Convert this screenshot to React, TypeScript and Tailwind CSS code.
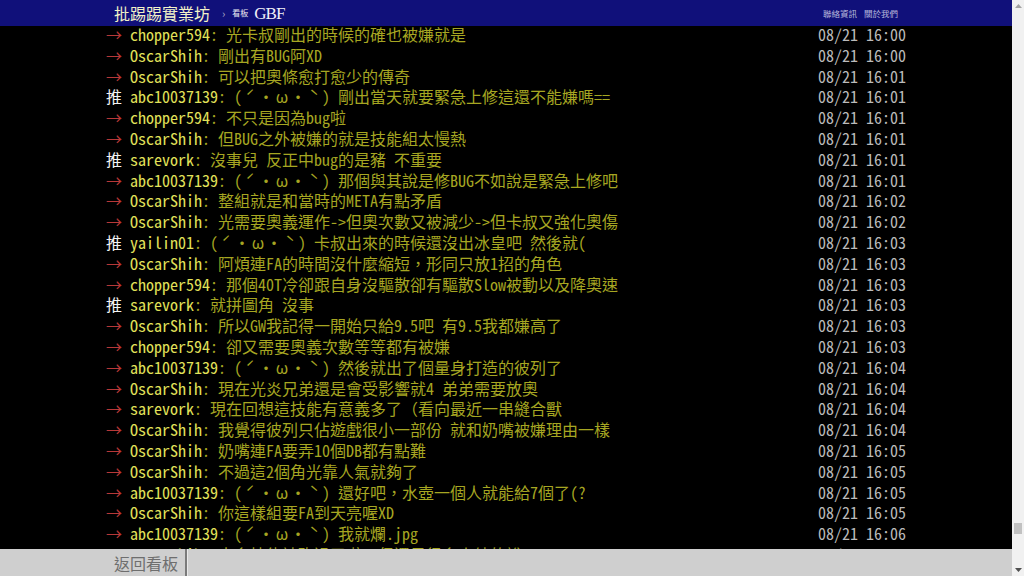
import React from "react";

type Push = { tag: "→" | "推"; user: string; face?: boolean; text: string; time: string };

const FACE_CHARS: [string, string][] = [
  ["(", "w-[8px]"],
  ["ˊ", "w-[16px]"],
  ["・", "w-[16px]"],
  ["ω", "w-[16px]"],
  ["・", "w-[16px]"],
  ["ˋ", "w-[16px]"],
  [")", "w-[8px]"],
];

const pushes: Push[] = [
  { tag: "→", user: "chopper594", text: "光卡叔剛出的時候的確也被嫌就是", time: "08/21 16:00" },
  { tag: "→", user: "OscarShih", text: "剛出有BUG阿XD", time: "08/21 16:00" },
  { tag: "→", user: "OscarShih", text: "可以把奧條愈打愈少的傳奇", time: "08/21 16:01" },
  { tag: "推", user: "abc10037139", face: true, text: "剛出當天就要緊急上修這還不能嫌嗎==", time: "08/21 16:01" },
  { tag: "→", user: "chopper594", text: "不只是因為bug啦", time: "08/21 16:01" },
  { tag: "→", user: "OscarShih", text: "但BUG之外被嫌的就是技能組太慢熱", time: "08/21 16:01" },
  { tag: "推", user: "sarevork", text: "沒事兒 反正中bug的是豬 不重要", time: "08/21 16:01" },
  { tag: "→", user: "abc10037139", face: true, text: "那個與其說是修BUG不如說是緊急上修吧", time: "08/21 16:01" },
  { tag: "→", user: "OscarShih", text: "整組就是和當時的META有點矛盾", time: "08/21 16:02" },
  { tag: "→", user: "OscarShih", text: "光需要奧義運作->但奧次數又被減少->但卡叔又強化奧傷", time: "08/21 16:02" },
  { tag: "推", user: "yailin01", face: true, text: "卡叔出來的時候還沒出冰皇吧 然後就(", time: "08/21 16:03" },
  { tag: "→", user: "OscarShih", text: "阿煩連FA的時間沒什麼縮短，形同只放1招的角色", time: "08/21 16:03" },
  { tag: "→", user: "chopper594", text: "那個40T冷卻跟自身沒驅散卻有驅散Slow被動以及降奧速", time: "08/21 16:03" },
  { tag: "推", user: "sarevork", text: "就拼圖角 沒事", time: "08/21 16:03" },
  { tag: "→", user: "OscarShih", text: "所以GW我記得一開始只給9.5吧 有9.5我都嫌高了", time: "08/21 16:03" },
  { tag: "→", user: "chopper594", text: "卻又需要奧義次數等等都有被嫌", time: "08/21 16:03" },
  { tag: "→", user: "abc10037139", face: true, text: "然後就出了個量身打造的彼列了", time: "08/21 16:04" },
  { tag: "→", user: "OscarShih", text: "現在光炎兄弟還是會受影響就4 弟弟需要放奧", time: "08/21 16:04" },
  { tag: "→", user: "sarevork", text: "現在回想這技能有意義多了（看向最近一串縫合獸", time: "08/21 16:04" },
  { tag: "→", user: "OscarShih", text: "我覺得彼列只佔遊戲很小一部份 就和奶嘴被嫌理由一樣", time: "08/21 16:04" },
  { tag: "→", user: "OscarShih", text: "奶嘴連FA要弄10個DB都有點難", time: "08/21 16:05" },
  { tag: "→", user: "OscarShih", text: "不過這2個角光靠人氣就夠了", time: "08/21 16:05" },
  { tag: "→", user: "abc10037139", face: true, text: "還好吧，水壺一個人就能給7個了(?", time: "08/21 16:05" },
  { tag: "→", user: "OscarShih", text: "你這樣組要FA到天亮喔XD", time: "08/21 16:05" },
  { tag: "→", user: "abc10037139", face: true, text: "我就爛.jpg", time: "08/21 16:06" },
  { tag: "→", user: "OscarShih", text: "太多技能被砍過了啦，但還是很多人練的說", time: "08/21 16:06" },
];

const MONO = {
  fontFamily: '"Noto Sans Mono CJK TC", "Noto Sans CJK TC", "Liberation Mono", monospace',
};

function PushRow({ p }: { p: Push }) {
  return (
    <div className="flex justify-between whitespace-pre text-[16px] leading-[20.8px]">
      <div>
        <span className={p.tag === "推" ? "text-[#f4f4f4]" : "text-[#b83838]"}>{p.tag + " "}</span>
        <span className="text-[#e2e25a]">{p.user}</span>
        <span className="text-[#a6a622]">
          {": "}
          {p.face &&
            FACE_CHARS.map(([c, w], i) => (
              <span key={i} className={"inline-block text-center " + w}>
                {c}
              </span>
            ))}
          {p.face ? " " : ""}
          {p.text}
        </span>
      </div>
      <span className="text-[#bbbbbb]">{p.time}</span>
    </div>
  );
}

export default function App() {
  return (
    <div className="flex h-[576px] w-[1024px] overflow-hidden bg-black">
      <div className="flex min-w-0 flex-1 flex-col">
        <div className="h-[26px] shrink-0 bg-[#10107a]">
          <div
            className="mx-auto flex h-full w-[800px] items-center justify-between px-2"
            style={{ fontFamily: '"Noto Sans CJK TC", sans-serif' }}
          >
            <div className="flex items-center">
              <span className="text-[16px] leading-none text-[#f2f2c8]">批踢踢實業坊</span>
              <span className="ml-[12px] text-[11px] leading-none text-[#b0b0c8]">›</span>
              <span className="ml-[7px] text-[8px] leading-none text-[#e8e8f0]">看板</span>
              <span
                className="ml-[6px] text-[17px] leading-none text-[#f0f0f8]"
                style={{ fontFamily: '"Liberation Serif", serif', letterSpacing: "-1px" }}
              >
                GBF
              </span>
            </div>
            <div className="flex items-center gap-[7px] text-[8.5px] leading-none text-[#b8b8dc]">
              <span>聯絡資訊</span>
              <span>關於我們</span>
            </div>
          </div>
        </div>
        <div className="min-h-0 flex-1 overflow-hidden">
          <div className="mx-auto -mt-[2px] w-[800px]" style={MONO}>
            {pushes.map((p, i) => (
              <PushRow key={i} p={p} />
            ))}
          </div>
        </div>
        <div className="h-[27px] shrink-0 bg-[#cfcfcf]">
          <div className="mx-auto flex h-full w-[800px] items-stretch px-2">
            <div
              className="flex items-center border-r-2 border-[#7a7a7a] pr-[7px] text-[16px] leading-none text-[#6e6e6e]"
              style={{ fontFamily: '"Noto Sans CJK TC", sans-serif' }}
            >
              返回看板
            </div>
            <div className="w-px bg-[#e8e8e8]" />
          </div>
        </div>
      </div>
      <div className="flex w-[12px] shrink-0 flex-col bg-[#f1f1f1]">
        <div className="flex h-[12px] items-center justify-center">
          <svg width="7" height="4" viewBox="0 0 7 4">
            <polygon points="3.5,0 7,4 0,4" fill="#a3a3a3" />
          </svg>
        </div>
        <div className="flex flex-1 flex-col justify-end px-[2px] pb-[30px]">
          <div className="h-[11px] bg-[#c1c1c1]" />
        </div>
        <div className="flex h-[12px] items-center justify-center">
          <svg width="7" height="4" viewBox="0 0 7 4">
            <polygon points="0,0 7,0 3.5,4" fill="#505050" />
          </svg>
        </div>
      </div>
    </div>
  );
}
